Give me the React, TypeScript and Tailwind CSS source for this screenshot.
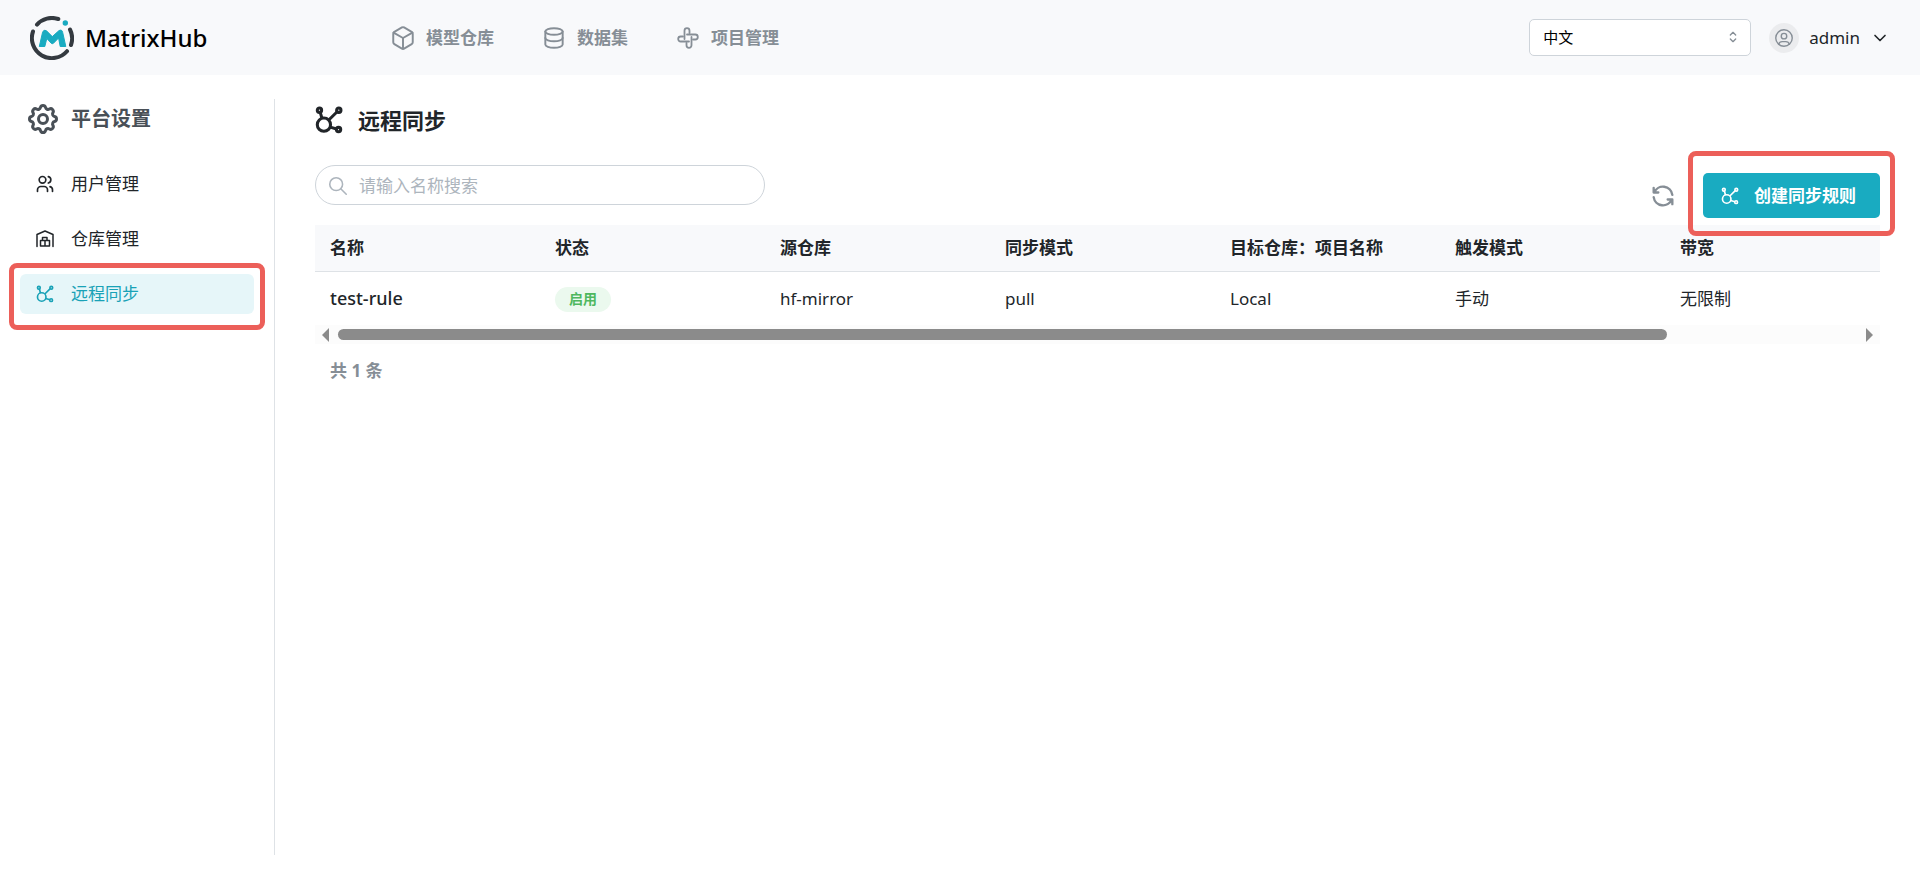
import type { ReactNode } from "react";
import { TbChevronDown, TbCube, TbDatabase, TbRefresh, TbSearch, TbSelector, TbSettings, TbUserCircle, TbUsers } from "react-icons/tb";

const COLUMNS = ["名称", "状态", "源仓库", "同步模式", "目标仓库：项目名称", "触发模式", "带宽"];

const RULES = [
  {
    name: "test-rule",
    status: "启用",
    source: "hf-mirror",
    mode: "pull",
    target: "Local",
    trigger: "手动",
    bandwidth: "无限制",
  },
];

function LogoMark() {
  return (
    <svg viewBox="0 0 44 44" className="size-11" fill="none" aria-hidden>
      <g stroke="#343a40" strokeWidth="4" strokeLinecap="round">
        <path d="M7 8.6A20 20 0 0 1 28.3 3" />
        <path d="M3 15.5A20 20 0 0 0 37 35.2" />
        <path d="M40 13.5A20 20 0 0 1 41 29" />
      </g>
      <path
        d="M9.3 30.5L12.6 16.2Q13.5 13.2 16.3 14.6L22.3 20.6L29 14.6Q32 13 32.7 16.5L35.8 30.5H30.2L28.6 22L23.5 27.2Q22.3 28.2 21.2 27.2L16.8 22.5L14.8 30.5Z"
        fill="#19abc1"
        stroke="#19abc1"
        strokeLinejoin="round"
      />
      <circle cx="35.3" cy="7" r="2.7" fill="#19abc1" />
    </svg>
  );
}

/** Four interlocked loops arranged as a pinwheel. */
function ProjectIcon() {
  return (
    <svg viewBox="-1 -1 26 26" className="size-[26px]" fill="none" stroke="currentColor" strokeWidth="1.8" strokeLinecap="round" strokeLinejoin="round" aria-hidden>
      <path d="M13.5 7V4.7a2.5 2.5 0 0 0-5 0V13" />
      <path d="M11 8.5h8.3a2.5 2.5 0 0 1 0 5H17" />
      <path d="M10.5 17v2.3a2.5 2.5 0 0 0 5 0V11" />
      <path d="M7 10.5H4.7a2.5 2.5 0 0 0 0 5H13" />
    </svg>
  );
}

function SyncIcon({ className, stroke = 2 }: { className: string; stroke?: number }) {
  return (
    <svg viewBox="1 1 22 22" className={className} fill="none" stroke="currentColor" strokeWidth={stroke} aria-hidden>
      <circle cx="8" cy="15.7" r="5.2" />
      <circle cx="4.5" cy="4.3" r="1.7" />
      <circle cx="19.7" cy="4.3" r="1.7" />
      <circle cx="19.5" cy="19.5" r="1.7" />
      <path d="M5.1 6l1.4 4.7M18.4 5.500l-6.6 6.500M13 17.600l4.9 1.500" />
    </svg>
  );
}

function WarehouseIcon() {
  return (
    <svg viewBox="0 0 20 20" className="size-5" fill="none" stroke="currentColor" strokeWidth="1.5" strokeLinecap="round" strokeLinejoin="round" aria-hidden>
      <path d="M2 17.5V5.500L10 2l8 3.500v12" />
      <path d="M5.5 11.500h4.500v5.500H5.500zM10 11.500h4.500v5.500H10zM7.500 11.500V8.500h4.500v3" />
    </svg>
  );
}

const NAV = [
  { label: "模型仓库", icon: <TbCube className="size-[26px]" strokeWidth={1.8} /> },
  { label: "数据集", icon: <TbDatabase className="size-[26px]" strokeWidth={1.8} /> },
  { label: "项目管理", icon: <ProjectIcon /> },
];

function TopBar() {
  return (
    <header className="flex h-[75px] items-center bg-[#f8f9fb] px-[30px]">
      <a href="#home" className="flex w-[360px] items-center gap-[11px] text-2xl font-medium text-black">
        <LogoMark />
        MatrixHub
      </a>
      <nav className="flex items-center gap-[47px] text-[17px] font-bold text-[#868e96]">
        {NAV.map((n) => (
          <a key={n.label} href="#nav" className="flex items-center gap-2.5">
            {n.icon}
            {n.label}
          </a>
        ))}
      </nav>
      <div className="ml-auto flex items-center gap-[18px]">
        <div className="relative">
          <select
            aria-label="语言"
            className="h-[37px] w-[222px] appearance-none rounded-[5px] border border-[#ced4da] bg-white px-[13px] text-[15px] text-black"
          >
            <option>中文</option>
          </select>
          <TbSelector className="pointer-events-none absolute top-2.5 right-2.5 size-4 text-[#868e96]" />
        </div>
        <button type="button" className="flex items-center gap-2.5 text-[17px] text-[#212529]">
          <span className="flex size-[30px] items-center justify-center rounded-full bg-[#ebecee] text-[#868e96]">
            <TbUserCircle className="size-[22px]" strokeWidth={1.5} />
          </span>
          admin
          <TbChevronDown className="size-5" />
        </button>
      </div>
    </header>
  );
}

function SideLink({ icon, label, active = false }: { icon: ReactNode; label: string; active?: boolean }) {
  return (
    <a
      href="#side"
      className={`flex h-10 items-center gap-4 rounded-md px-[15px] text-[17px] ${
        active ? "bg-[#e6f6f9] text-[#19a2b7]" : "text-[#212529]"
      }`}
    >
      {icon}
      {label}
    </a>
  );
}

function Sidebar() {
  return (
    <aside className="my-6 w-[275px] shrink-0 border-r border-[#dee2e6] px-5">
      <h2 className="flex items-center gap-2.5 pt-0.5 pl-[5px] text-xl font-bold text-[#495057]">
        <TbSettings className="size-9" />
        平台设置
      </h2>
      <div className="mt-[27px] flex flex-col gap-[15px]">
        <SideLink icon={<TbUsers className="size-5" />} label="用户管理" />
        <SideLink icon={<WarehouseIcon />} label="仓库管理" />
        <div className="relative">
          <SideLink icon={<SyncIcon className="size-5 p-px" />} label="远程同步" active />
          <span className="pointer-events-none absolute -inset-x-[11px] -top-[11px] -bottom-4 rounded-lg border-[5px] border-[#ec5f59]" />
        </div>
      </div>
    </aside>
  );
}

function RulesTable() {
  return (
    <div className="mt-[7px]">
      <table className="w-full table-fixed text-left text-[17px] text-[#212529]">
        <thead>
          <tr className="h-[46px] border-b border-[#dee2e6] bg-[#f8f9fb]">
            {COLUMNS.map((c) => (
              <th key={c} scope="col" className="w-[225px] px-[15px] font-bold last:w-auto">
                {c}
              </th>
            ))}
          </tr>
        </thead>
        <tbody>
          {RULES.map((r) => (
            <tr key={r.name} className="h-[54px]">
              <td className="px-[15px] text-lg font-medium">{r.name}</td>
              <td className="px-[15px]">
                <span className="inline-flex h-[25px] items-center rounded-full bg-[#ebf9ee] px-3.5 text-sm font-bold text-[#4fb85f]">
                  {r.status}
                </span>
              </td>
              <td className="px-[15px]">{r.source}</td>
              <td className="px-[15px]">{r.mode}</td>
              <td className="px-[15px]">{r.target}</td>
              <td className="px-[15px]">{r.trigger}</td>
              <td className="px-[15px]">{r.bandwidth}</td>
            </tr>
          ))}
        </tbody>
      </table>
      <div className="flex h-[19px] items-center justify-between bg-[#fcfcfc] px-[7px]">
        <span className="border-y-[7px] border-r-[7px] border-y-transparent border-r-[#8b8b8b]" />
        <div className="mx-[9px] flex-1">
          <div className="h-[11px] w-7/8 rounded-full bg-[#8b8b8b]" />
        </div>
        <span className="border-y-[7px] border-l-[7px] border-y-transparent border-l-[#8b8b8b]" />
      </div>
      <p className="mt-3.5 px-[15px] text-[17px] font-bold text-[#868e96]">共 1 条</p>
    </div>
  );
}

export default function App() {
  return (
    <div className="flex min-h-screen flex-col bg-white font-['Noto_Sans','Noto_Sans_CJK_SC',sans-serif]">
      <TopBar />
      <div className="flex flex-1">
        <Sidebar />
        <main className="min-w-0 flex-1 px-10 pt-[30px]">
          <h1 className="flex items-center gap-[15px] text-[22px] leading-[30px] font-bold text-[#212529]">
            <SyncIcon className="size-7" stroke={2.4} />
            远程同步
          </h1>
          <div className="mt-[30px] flex items-start justify-between">
            <div className="relative w-[450px]">
              <TbSearch className="absolute top-2.5 left-3 size-[22px] text-[#adb5bd]" strokeWidth={1.7} />
              <input
                type="search"
                aria-label="搜索"
                placeholder="请输入名称搜索"
                className="h-10 w-full rounded-full border border-[#ced4da] pr-4 pl-[43px] text-[17px] placeholder:text-[#adb5bd]"
              />
            </div>
            <div className="mt-2 flex items-center gap-[26px]">
              <button type="button" aria-label="刷新" className="text-[#868e96]">
                <TbRefresh className="size-7" />
              </button>
              <div className="relative">
                <button
                  type="button"
                  className="flex h-[45px] items-center gap-3.5 rounded-[5px] bg-[#19abc1] pr-6 pl-[17px] text-[17px] font-bold text-white"
                >
                  <SyncIcon className="size-5 p-px" />
                  创建同步规则
                </button>
                <span className="pointer-events-none absolute -inset-x-[15px] -top-[22px] -bottom-[18px] rounded-lg border-[5px] border-[#ec5f59]" />
              </div>
            </div>
          </div>
          <RulesTable />
        </main>
      </div>
    </div>
  );
}
